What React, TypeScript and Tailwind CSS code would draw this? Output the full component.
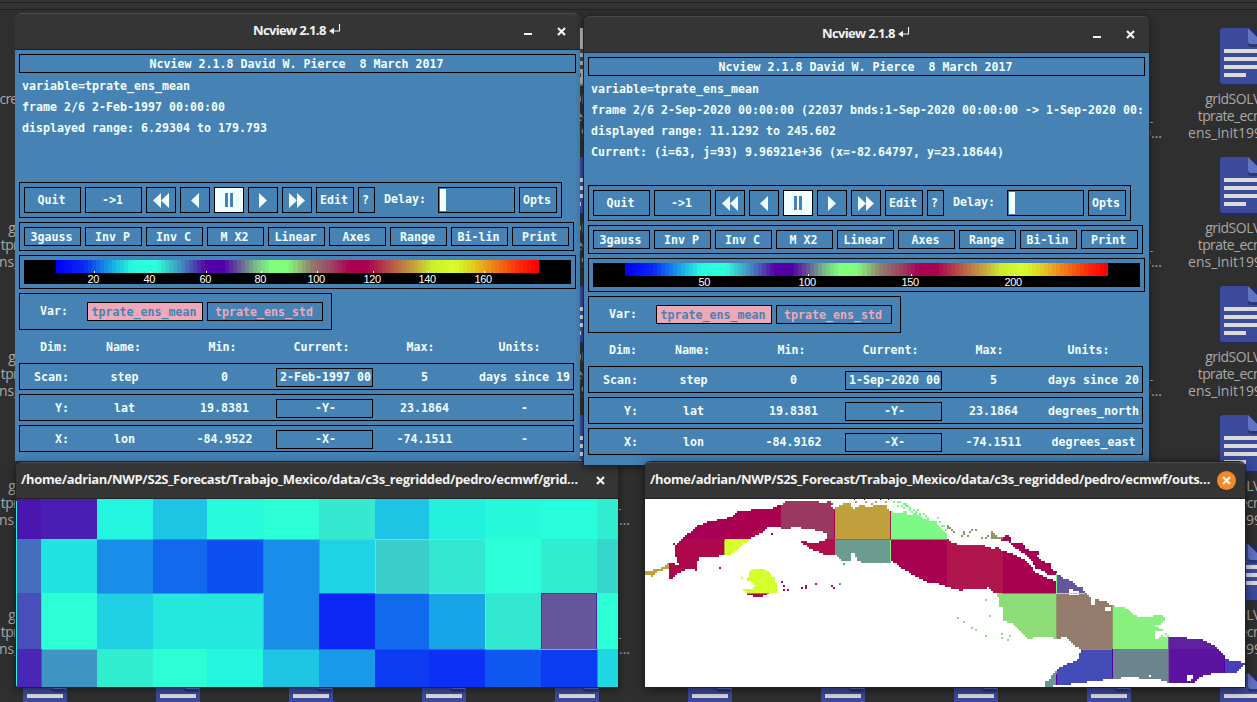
import React from "react";

type Pt = [number, number];

const MONO = "font-['DejaVu_Sans_Mono','Liberation_Mono',monospace] text-[11.63px] font-bold leading-[14px] whitespace-pre text-[#f0ffff]";
const UI = "font-['Open_Sans','Noto_Sans',sans-serif]";

/* ---------- desktop ---------- */

function FileIcon({ grey }: { grey?: boolean }) {
  return (
    <svg width="44" height="58" viewBox="0 0 44 58" className="block shrink-0">
      <rect y="2" width="44" height="56" rx="3" fill={grey ? "#777" : "#252c5c"} />
      <path d="M3 0H28L44 16V53a3 3 0 0 1-3 3H3a3 3 0 0 1-3-3V3a3 3 0 0 1 3-3Z" fill={grey ? "#b4b4b4" : "#3c4a9c"} />
      <path d="M28 3L44 19H31a3 3 0 0 1-3-3Z" fill={grey ? "#666" : "#2c3675"} />
      <path d="M28 0L44 16H31a3 3 0 0 1-3-3Z" fill={grey ? "#888" : "#6272c4"} />
      <path d="M4 21h36v4H4zM4 29h36v4H4zM4 37h36v4H4zM4 45h22v4H4z" fill={grey ? "#444" : "#dadada"} />
    </svg>
  );
}

const YEARS = ["1993_0…", "1994_0…", "1995_0…", "1996_0…", "1997_0…", "1998_0…"];

function Desktop() {
  return (
    <div className="absolute top-0 left-0 h-[702px] w-[1257px] overflow-hidden bg-[#2f2f2f]">
      <div className="h-[3px] border-b border-[#1f1f1f] bg-[#333]" />
      <div className="h-[7px] border-b border-[#1f1f1f] bg-[#333]" />
      <div className="-ml-[22px] grid w-[1330px] grid-cols-[repeat(10,133px)] pt-[18px]">
        {YEARS.map((y, r) =>
          Array.from({ length: 10 }, (_, c) => (
            <div key={r + "-" + c} className="flex h-[129px] flex-col items-center">
              <FileIcon grey={r === 0 && c === 4} />
              <div className={UI + " mt-[4px] flex flex-col items-center text-[14px] leading-[17px] whitespace-nowrap text-[#a9a9a9]"}>
                {r === 0 && c === 0 ? (
                  <span className="w-[90px] tracking-[-0.8px]">cre</span>
                ) : (
                  <>
                    <span className="tracking-[-0.5px]">gridSOLVED</span>
                    <span className="tracking-[-0.6px]">tprate_ecmwf_</span>
                    <span className="tracking-[0px]">{"ens_init" + y}</span>
                  </>
                )}
              </div>
            </div>
          )),
        )}
      </div>
    </div>
  );
}

/* ---------- window chrome ---------- */

function CloseGlyph() {
  return (
    <svg width="9" height="9" viewBox="0 0 9 9" className="block">
      <path d="M1 1L8 8M8 1L1 8" stroke="#f4f4f4" strokeWidth="2.2" />
    </svg>
  );
}

const BAR =
  "flex h-[37px] items-center rounded-t-[6px] border-t border-b border-t-[#4b4b4b] border-b-[#222] bg-[#353535] pb-px text-[#f2f2f2] " +
  "font-['Open_Sans','Noto_Sans',sans-serif] font-bold whitespace-nowrap";

function NcTitle() {
  return (
    <div className={BAR}>
      <div className="ml-[238px] flex w-[271px] items-center gap-[2px]">
        <span className="inline-block w-[74px] text-[13px] tracking-[-0.65px]">Ncview 2.1.8</span>
        <svg width="12" height="11" viewBox="0 0 12 11" className="-mt-[3px]">
          <path d="M10.5 0V7H3" fill="none" stroke="#f2f2f2" strokeWidth="1.1" />
          <path d="M0 7L5 3.8V10.2Z" fill="#f2f2f2" />
        </svg>
      </div>
      <div className="mt-[5px] h-[2px] w-[8px] bg-[#f4f4f4]" />
      <div className="ml-[25px]">
        <CloseGlyph />
      </div>
    </div>
  );
}

function PathTitle({ text, active }: { text: string; active?: boolean }) {
  return (
    <div className={BAR}>
      <span className={"ml-[5px] text-[13px] tracking-[-0.34px] " + (active ? "w-[567px]" : "w-[570px]")}>{text}</span>
      <div className={"flex h-[19px] w-[19px] items-center justify-center rounded-full " + (active ? "bg-[#f08a2c]" : "")}>
        <CloseGlyph />
      </div>
    </div>
  );
}

/* ---------- ncview control window ---------- */

function Btn({ children, w = "w-[57px]", h = "h-[19px]", tone = "", icon }: { children?: React.ReactNode; w?: string; h?: string; tone?: string; icon?: boolean }) {
  return <div className={"flex shrink-0 items-center justify-center border border-black " + (icon ? "" : "pr-[2px] ") + w + " " + h + " " + tone}>{children}</div>;
}

const tri = (x: number, dir: number) => (dir < 0 ? `M${x + 8} 0V15L${x} 7.5Z` : `M${x} 0V15L${x + 8} 7.5Z`);

function Arrow({ dir, double }: { dir: number; double?: boolean }) {
  return (
    <svg width={double ? 16 : 8} height="15" viewBox={double ? "0 0 16 15" : "0 0 8 15"} fill="#f0ffff">
      <path d={tri(0, dir)} />
      {double && <path d={tri(8, dir)} />}
    </svg>
  );
}

const PALETTE: [number, string][] = [
  [0, "#0000ff"], [6, "#0a28f5"], [11, "#158de8"], [17, "#27fbdc"], [22.5, "#2fffd8"], [28.5, "#4486bd"],
  [34, "#5400a5"], [38, "#5000a8"], [42, "#6a6094"], [45.5, "#78c084"], [49, "#82ff7c"], [53, "#84fa7c"],
  [58, "#937f6c"], [63, "#9c4060"], [67, "#a80052"], [71, "#aa0050"], [78, "#bc6a44"], [82, "#c4a43c"], [86, "#ccee2c"], [91, "#d6ff2a"],
  [95, "#e0d020"], [100, "#f08018"], [106, "#fc2808"], [110, "#ff0000"],
];

function hex(c: string) {
  return [1, 3, 5].map((i) => parseInt(c.slice(i, i + 2), 16));
}

function shade(t: number) {
  const v = t * 110;
  let i = 0;
  while (i < PALETTE.length - 2 && PALETTE[i + 1][0] < v) i++;
  const [a, ca] = PALETTE[i];
  const [b, cb] = PALETTE[i + 1];
  const k = Math.min(1, Math.max(0, (v - a) / (b - a)));
  const x = hex(ca);
  const y = hex(cb);
  return "rgb(" + x.map((n, j) => Math.round(n + (y[j] - n) * k)).join(",") + ")";
}

function ColorBar({ ticks }: { ticks: [number, string][] }) {
  const n = 120;
  return (
    <svg width="547" height="24" className="block bg-black" shapeRendering="crispEdges">
      {Array.from({ length: n }, (_, i) => (
        <rect key={i} x={32 + Math.round((i * 483) / n)} y="0" width={Math.round(((i + 1) * 483) / n) - Math.round((i * 483) / n)} height="13" fill={shade(i / (n - 1))} />
      ))}
      {ticks.map(([x, label]) => (
        <g key={label} fill="#fff">
          <rect x={x} y="11" width="1" height="2" />
          <text x={x - 0.8} y="23" textAnchor="middle" fontSize="11" fontWeight="400" letterSpacing="-0.4" fontFamily="'Liberation Sans', sans-serif">
            {label}
          </text>
        </g>
      ))}
    </svg>
  );
}

interface NcProps {
  lines: string[];
  ticks: [number, string][];
  rows: string[][];
}

function NcWindow({ lines, ticks, rows }: NcProps) {
  return (
    <div className="w-[565px] rounded-t-[6px] shadow-[0_0_0_1px_#222,0_2px_8px_rgba(0,0,0,0.5)]">
      <NcTitle />
      <div className={"flex h-[412px] flex-col bg-[#4682b4] px-[4px] pt-[4px] " + MONO}>
        <div className="flex h-[19px] items-center justify-center border border-black pr-[2px]">Ncview 2.1.8 David W. Pierce  8 March 2017</div>
        <div className="h-[109px] overflow-hidden pt-[3px] pl-[3px] leading-[21px]">
          {lines.map((l) => (
            <div key={l}>{l}</div>
          ))}
        </div>
        <div className="flex h-[36px] w-[543px] shrink-0 items-center gap-[4px] border border-black pl-[4px]">
          <Btn h="h-[26px]">Quit</Btn>
          <Btn h="h-[26px]">{"->1"}</Btn>
          <Btn icon w="w-[30px]" h="h-[26px]"><Arrow dir={-1} double /></Btn>
          <Btn icon w="w-[30px]" h="h-[26px]"><Arrow dir={-1} /></Btn>
          <Btn icon w="w-[30px]" h="h-[26px]" tone="bg-[#f0ffff] gap-[2px]">
            <div className="h-[14px] w-[3px] bg-[#4682b4]" />
            <div className="h-[14px] w-[3px] bg-[#4682b4]" />
          </Btn>
          <Btn icon w="w-[30px]" h="h-[26px]"><Arrow dir={1} /></Btn>
          <Btn icon w="w-[30px]" h="h-[26px]"><Arrow dir={1} double /></Btn>
          <Btn w="w-[38px]" h="h-[26px]">Edit</Btn>
          <Btn w="w-[17px]" h="h-[26px]">?</Btn>
          <div className="w-[55px] pb-[2px] pl-[5px]">Delay:</div>
          <div className="flex h-[26px] w-[77px] items-center border border-black pl-[1px]">
            <div className="h-[22px] w-[6px] bg-[#f0ffff]" />
          </div>
          <Btn w="w-[38px]" h="h-[26px]">Opts</Btn>
        </div>
        <div className="mt-[4px] flex h-[29px] w-[555px] shrink-0 items-center gap-[4px] border border-black pl-[4px]">
          {["3gauss", "Inv P", "Inv C", "M X2", "Linear", "Axes", "Range", "Bi-lin", "Print"].map((t) => (
            <Btn key={t}>{t}</Btn>
          ))}
        </div>
        <div className="mt-[4px] h-[34px] shrink-0 border border-black p-[4px]">
          <ColorBar ticks={ticks} />
        </div>
        <div className="mt-[4px] flex h-[37px] w-[313px] shrink-0 items-center gap-[4px] border border-black pl-[20px]">
          <div className="w-[43px] pb-[2px]">Var:</div>
          <Btn w="w-[116px]" tone="bg-[#eda9b8] text-[#4682b4]">tprate_ens_mean</Btn>
          <Btn w="w-[116px]" tone="text-[#eda9b8]">tprate_ens_std</Btn>
        </div>
        <div className="flex h-[33px] shrink-0 items-center">
          <div className="mr-[6px] w-[49px] text-right">Dim:</div>
          {["Name:", "Min:", "Current:", "Max:", "Units:"].map((t) => (
            <div key={t} className="w-[99px] text-center">{t}</div>
          ))}
        </div>
        {rows.map(([label, name, min, cur, max, units]) => (
          <div key={label} className="mb-[4px] flex h-[27px] w-[555px] shrink-0 items-center gap-[3px] border border-black">
            <div className="mr-[4px] w-[49px] text-right">{label}</div>
            <div className="w-[97px] text-center">{name}</div>
            <div className="w-[97px] text-center">{min}</div>
            <div className="mt-[1px] flex h-[19px] w-[97px] items-center justify-center border border-black pl-[2px]">{cur}</div>
            <div className="w-[97px] text-center">{max}</div>
            <div className="w-[97px] text-center">{units}</div>
          </div>
        ))}
      </div>
    </div>
  );
}

/* ---------- heat map ---------- */

const HX = [1, 25, 81, 137, 191, 247, 303, 359, 413, 469, 525, 581, 602];
const HY = [0, 40, 94, 150, 188];
const HEAT = [
  ["#4b16b0", "#4a1eb4", "#24f5de", "#1ec4e4", "#28fbdc", "#2cffd6", "#35e8d0", "#1ec4e4", "#23f1de", "#27fadb", "#28fddb", "#31edd0"],
  ["#436fbd", "#20e4e2", "#188ee8", "#116aee", "#0c50f0", "#188ee8", "#1fd2e4", "#3acfcb", "#33e8d0", "#2affd8", "#31edd0", "#37d6cc"],
  ["#484fb8", "#2cffd6", "#1ed0e2", "#24e8de", "#24e8de", "#188ee8", "#0c26f4", "#116aee", "#18a4e8", "#33e8d0", "#66569c", "#2cffd6"],
  ["#4926b4", "#3e95c2", "#31edd0", "#2cffd6", "#24f5de", "#1ec4e4", "#189ae8", "#0c3cf2", "#0c30f6", "#1056f0", "#0c3cf2", "#20d8e2"],
];
const SEAMS: [number, number, number, number, string][] = [
  [0, 2, 1, 185, "#2ff0d8"],
  [25, 40, 56, 1, "#35e8d0"], [81, 40, 56, 1, "#1ec4e4"], [137, 40, 55, 1, "#188ee8"], [191, 40, 56, 1, "#18a0e8"], [247, 40, 56, 1, "#1fc8e4"],
  [303, 40, 56, 1, "#28e8dc"], [359, 40, 110, 1, "#2cffd6"], [25, 40, 1, 54, "#35d8d0"],
  [81, 94, 56, 1, "#1aa8e8"], [137, 94, 110, 1, "#18a4e8"], [247, 94, 1, 56, "#1ec4e4"], [303, 94, 56, 1, "#116aee"], [359, 94, 54, 1, "#1ec4e4"],
  [413, 94, 56, 1, "#2cffd6"], [469, 94, 1, 56, "#2cffd6"], [359, 40, 1, 54, "#2cffd6"], [303, 40, 1, 54, "#1ab0e6"],
  [25, 150, 56, 1, "#37d6cc"], [137, 150, 56, 1, "#2cffd6"], [247, 150, 56, 1, "#18a4e8"], [303, 150, 56, 1, "#116aee"], [359, 150, 54, 1, "#1056f0"],
  [413, 150, 56, 1, "#116aee"], [469, 150, 56, 1, "#1ec4e4"], [525, 150, 56, 1, "#3acfcb"], [247, 40, 1, 54, "#1480ea"], [25, 94, 1, 56, "#35d8d0"],
  [25, 150, 1, 38, "#4550b8"], [581, 150, 1, 38, "#188ee8"], [525, 94, 56, 1, "#4c20a8"], [525, 94, 1, 56, "#4c20a8"], [580, 94, 1, 56, "#4c20a8"],
];

function HeatMap() {
  return (
    <svg width="602" height="188" className="block bg-[#353535]" shapeRendering="crispEdges">
      {HEAT.map((row, r) =>
        row.map((c, i) => <rect key={r + "-" + i} x={HX[i]} y={HY[r]} width={HX[i + 1] - HX[i]} height={HY[r + 1] - HY[r]} fill={c} />),
      )}
      {SEAMS.map(([x, y, w, h, c], i) => (
        <rect key={i} x={x} y={y} width={w} height={h} fill={c} />
      ))}
    </svg>
  );
}

/* ---------- land map, rasterised to 2px cells ---------- */

const LAND: Pt[][] = [
  [
    [103, 290], [106, 272], [118, 260], [135, 240], [150, 232], [165, 216], [183, 210], [208, 198], [255, 192], [285, 180], [293, 168], [330, 166],
    [340, 163], [395, 160], [407, 156], [425, 148], [440, 138], [490, 141], [520, 138], [550, 143], [572, 138], [582, 146], [568, 155], [584, 162], [590, 155], [612, 145],
    [630, 146], [642, 161], [665, 150], [680, 156], [715, 150], [740, 150], [748, 168], [775, 174], [812, 178], [830, 174], [850, 190], [880, 198],
    [900, 216], [918, 234], [922, 253], [936, 262], [960, 269], [1015, 269], [1023, 270], [1040, 274], [1060, 282], [1072, 276], [1087, 288],
    [1115, 294], [1140, 306], [1160, 318], [1175, 336], [1185, 350], [1200, 358], [1225, 372], [1249, 378], [1250, 355], [1262, 364], [1280, 374],
    [1298, 378], [1304, 390], [1324, 396], [1337, 412], [1355, 430], [1375, 434], [1400, 440], [1410, 452], [1418, 452], [1450, 456], [1465, 464],
    [1480, 478], [1500, 486], [1530, 486], [1545, 480], [1575, 484], [1572, 498], [1560, 510], [1544, 514], [1560, 520], [1575, 528], [1586, 542],
    [1600, 546], [1655, 550], [1690, 554], [1710, 564], [1730, 578], [1745, 590], [1755, 606], [1758, 614], [1795, 618], [1808, 622], [1815, 630],
    [1800, 642], [1790, 654], [1755, 655], [1720, 655], [1700, 660], [1680, 665], [1665, 682], [1586, 684], [1565, 676], [1550, 672], [1520, 674],
    [1490, 668], [1460, 666], [1430, 672], [1395, 674], [1370, 680], [1310, 682], [1280, 690], [1249, 690], [1235, 696], [1216, 696], [1216, 680],
    [1230, 672], [1238, 655], [1250, 648], [1265, 634], [1290, 624], [1313, 618], [1322, 590], [1320, 580], [1305, 575], [1290, 558], [1280, 548],
    [1249, 550], [1210, 546], [1165, 550], [1150, 538], [1130, 520], [1115, 505], [1092, 498], [1088, 460], [1080, 455], [1078, 430], [1070, 418],
    [1060, 410], [1045, 398], [1020, 402], [990, 402], [960, 406], [930, 398], [905, 390], [890, 384], [865, 384], [850, 376], [820, 362],
    [800, 348], [780, 336], [770, 326], [755, 320], [745, 324], [665, 324], [650, 314], [646, 292], [636, 292], [632, 318], [605, 316], [590, 300], [560, 302],
    [535, 290], [510, 282], [495, 270], [478, 264], [492, 258], [515, 264], [535, 262], [560, 252], [558, 236], [535, 226], [500, 222],
    [470, 216], [440, 222], [410, 216], [380, 218], [372, 230], [330, 250], [320, 260], [300, 276], [285, 290], [270, 300], [250, 297],
    [235, 304], [175, 308], [170, 346], [145, 340], [115, 355], [95, 370], [88, 370], [88, 325], [115, 328],
  ],
  [[18, 346], [36, 346], [60, 340], [78, 330], [87, 325], [87, 340], [50, 352], [38, 364], [18, 360]],
  [
    [1053, 230], [1064, 232], [1070, 242], [1088, 248], [1100, 240], [1112, 246], [1115, 262], [1150, 266], [1158, 280], [1175, 290], [1200, 290], [1192, 306],
    [1215, 322], [1232, 324], [1232, 342], [1250, 350], [1250, 362], [1225, 358], [1205, 346], [1185, 338], [1175, 318], [1160, 304], [1150, 294], [1135, 284],
    [1115, 270], [1100, 256], [1072, 254], [1055, 250],
  ],
  [
    [328, 348], [340, 342], [368, 342], [375, 347], [392, 352], [396, 364], [406, 372], [410, 390], [410, 412], [387, 415], [370, 424], [340, 424], [322, 418],
    [309, 406], [309, 402], [325, 402], [340, 402], [345, 392], [333, 382], [320, 376], [320, 370], [328, 366],
  ],
];

const HOLES: Pt[][] = [
  [[1284, 400], [1298, 400], [1298, 408], [1316, 408], [1316, 420], [1290, 420]],
  [[1352, 432], [1364, 432], [1364, 448], [1352, 448]],
  [[1398, 454], [1414, 454], [1414, 468], [1398, 468]],
  [[1543, 525], [1572, 530], [1580, 546], [1564, 540], [1556, 550], [1542, 550]],
  [[1640, 660], [1660, 660], [1654, 680], [1638, 676]],
  [[1526, 660], [1534, 660], [1534, 668], [1526, 668]],
];

const DOTS: Pt[] = [
  [102, 268], [396, 237], [240, 339], [306, 369], [425, 381], [432, 393], [432, 404], [444, 404], [486, 399], [498, 393], [498, 399],
  [528, 387], [576, 393], [582, 399], [600, 387], [612, 327], [645, 142], [680, 142], [696, 148], [708, 142], [738, 142], [762, 141], [774, 141],
  [792, 147], [798, 147], [804, 153], [774, 153], [810, 165], [792, 168], [798, 171], [822, 165], [834, 165], [858, 183], [892, 189], [888, 201], [900, 201],
  [792, 159], [798, 153], [810, 159], [816, 171], [828, 171], [840, 177], [786, 153], [852, 177], [864, 189], [780, 141],
  [912, 213], [904, 210], [918, 222], [922, 215], [922, 221], [930, 219], [936, 225], [942, 231], [966, 243], [972, 237], [990, 231], [996, 225], [1008, 225],
  [972, 231], [986, 243], [1026, 249], [1038, 249], [1044, 240], [1038, 435], [1050, 483], [954, 489], [972, 501], [996, 519], [1008, 525],
  [1038, 543], [1086, 537], [1086, 549], [1104, 555], [1110, 543], [1152, 280], [1180, 294], [1164, 290],
];

const CX = [87, 253, 422, 583, 752, 920, 1087, 1249, 1418, 1586, 1754];
const CELLS = [
  ["", "#a80056", "#aa0050", "#99395f", "#c0a03c", "#7cf884", "#8f9868", "#a0084f", "", "", "", ""],
  ["#c0a03c", "#ae084c", "#d4ff2c", "#b00f4c", "#6c9c90", "#a80050", "#b0144c", "#a80050", "#66569c", "", "", ""],
  ["", "#ac084c", "#ae084c", "#ac084c", "", "", "#8cdc78", "#8cdc78", "#947c6c", "#88f07c", "#6020a0", "#4840b8"],
  ["", "", "", "", "", "", "", "#6c9490", "#444cb8", "#6c8490", "#5c14a0", "#4840b8"],
];

function colorAt(x: number, y: number) {
  const c = CX.filter((v) => x >= v).length;
  const r = y < 253 ? 0 : y < 415 ? 1 : y < 583 ? 2 : 3;
  return CELLS[r][c] || "#a80050";
}

function inside(x: number, y: number, p: Pt[]) {
  let s = false;
  for (let i = 0, j = p.length - 1; i < p.length; j = i++) {
    const [xi, yi] = p[i];
    const [xj, yj] = p[j];
    if (yi > y !== yj > y && x < ((xj - xi) * (y - yi)) / (yj - yi) + xi) s = !s;
  }
  return s;
}

function buildRuns() {
  const runs: { x: number; y: number; w: number; c: string }[] = [];
  const dots = new Set(DOTS.map(([x, y]) => Math.floor((x - 15) / 6) + "," + Math.floor((y - 132) / 6)));
  for (let r = 0; r < 94; r++) {
    let last: { x: number; y: number; w: number; c: string } | null = null;
    for (let c = 0; c < 300; c++) {
      const x = 18 + c * 6;
      const y = 135 + r * 6;
      const on = dots.has(c + "," + r) || (LAND.some((p) => inside(x, y, p)) && !HOLES.some((p) => inside(x, y, p)));
      if (!on) {
        last = null;
        continue;
      }
      const col = colorAt(x, y);
      if (last && last.c === col) last.w += 2;
      else {
        last = { x: c * 2, y: r * 2, w: 2, c: col };
        runs.push(last);
      }
    }
  }
  return runs;
}

const RUNS = buildRuns();
const LINES: [number, number, number, number, string][] = [
  [189, 11, 1, 29, "#a80050"], [245, 12, 1, 28, "#a0204c"], [189, 40, 57, 1, "#a06058"], [246, 40, 56, 1, "#947c6c"], [79, 41, 1, 15, "#c0a03c"],
  [245, 41, 1, 22, "#7cf884"], [411, 74, 1, 20, "#7cf884"], [357, 94, 54, 1, "#947c6c"], [411, 94, 29, 1, "#7cf884"], [411, 95, 1, 44, "#8f9868"],
  [467, 107, 1, 43, "#8f9868"], [437, 150, 30, 1, "#6c9490"], [411, 175, 1, 11, "#5400a5"], [467, 150, 1, 29, "#5400a5"], [523, 138, 1, 45, "#6a6094"],
  [579, 158, 1, 16, "#5000a8"], [102, 94, 22, 1, "#c86838"],
  [209, 0, 1, 1, "#0000ff"], [219, 0, 1, 1, "#0000ff"], [235, 0, 1, 1, "#0000ff"], [243, 0, 1, 1, "#0000ff"],
];

function LandMap() {
  return (
    <svg width="600" height="188" className="block bg-white" shapeRendering="crispEdges">
      {RUNS.map((r, i) => (
        <rect key={i} x={r.x} y={r.y} width={r.w} height="2" fill={r.c} />
      ))}
      {LINES.map(([x, y, w, h, c], i) => (
        <rect key={"l" + i} x={x} y={y} width={w} height={h} fill={c} />
      ))}
    </svg>
  );
}

/* ---------- page ---------- */

const TICKS_A: [number, string][] = [
  [70, "20"], [126, "40"], [182, "60"], [237, "80"], [293, "100"], [349, "120"], [404, "140"], [460, "160"],
];
const TICKS_B: [number, string][] = [[112, "50"], [215, "100"], [318, "150"], [421, "200"]];

export default function App() {
  return (
    <div className="relative h-[702px] w-[1257px] overflow-hidden">
      <Desktop />
      <div className="absolute top-[13px] left-[15px] h-[448px] overflow-hidden">
        <NcWindow
          lines={["variable=tprate_ens_mean", "frame 2/6 2-Feb-1997 00:00:00", "displayed range: 6.29304 to 179.793"]}
          ticks={TICKS_A}
          rows={[
            ["Scan:", "step", "0", "2-Feb-1997 00", "5", "days since 19"],
            ["Y:", "lat", "19.8381", "-Y-", "23.1864", "-"],
            ["X:", "lon", "-84.9522", "-X-", "-74.1511", "-"],
          ]}
        />
      </div>
      <div className="absolute top-[462px] left-[16px] w-[602px] rounded-t-[6px] shadow-[0_0_0_1px_#222,0_2px_10px_rgba(0,0,0,0.5)]">
        <PathTitle text="/home/adrian/NWP/S2S_Forecast/Trabajo_Mexico/data/c3s_regridded/pedro/ecmwf/grid…" />
        <HeatMap />
      </div>
      <div className="absolute top-[16px] left-[584px]">
        <NcWindow
          lines={[
            "variable=tprate_ens_mean",
            "frame 2/6 2-Sep-2020 00:00:00 (22037 bnds:1-Sep-2020 00:00:00 -> 1-Sep-2020 00:",
            "displayed range: 11.1292 to 245.602",
            "Current: (i=63, j=93) 9.96921e+36 (x=-82.64797, y=23.18644)",
          ]}
          ticks={TICKS_B}
          rows={[
            ["Scan:", "step", "0", "1-Sep-2020 00", "5", "days since 20"],
            ["Y:", "lat", "19.8381", "-Y-", "23.1864", "degrees_north"],
            ["X:", "lon", "-84.9162", "-X-", "-74.1511", "degrees_east"],
          ]}
        />
      </div>
      <div className="absolute top-[462px] left-[645px] w-[600px] rounded-t-[6px] shadow-[0_0_0_1px_#222,0_2px_12px_rgba(0,0,0,0.6)]">
        <PathTitle active text="/home/adrian/NWP/S2S_Forecast/Trabajo_Mexico/data/c3s_regridded/pedro/ecmwf/outs…" />
        <LandMap />
      </div>
    </div>
  );
}
